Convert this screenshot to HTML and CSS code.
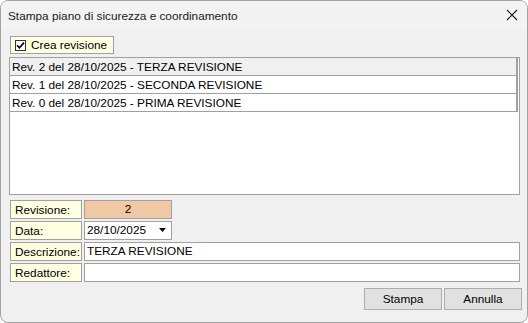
FILE: index.html
```html
<!DOCTYPE html>
<html>
<head>
<meta charset="utf-8">
<link rel="stylesheet" href="styles.css">
</head>
<body>
<div class="window">
  <div class="titlebar">
    <span class="title">Stampa piano di sicurezza e coordinamento</span>
    <svg class="close" width="12" height="12" viewBox="0 0 12 12"><path d="M1 1 L11 11 M11 1 L1 11" stroke="#1a1a1a" stroke-width="1.1" fill="none"/></svg>
  </div>
  <div class="content">
    <label class="checkgroup">
      <span class="checkbox"><svg width="9" height="9" viewBox="0 0 9 9"><path d="M1 4.2 L3.4 6.8 L8 1.6" stroke="#000" stroke-width="1.6" fill="none"/></svg></span>
      <span>Crea revisione</span>
    </label>
    <div class="list">
      <div class="row selected">Rev. 2 del 28/10/2025 - TERZA REVISIONE</div>
      <div class="row">Rev. 1 del 28/10/2025 - SECONDA REVISIONE</div>
      <div class="row">Rev. 0 del 28/10/2025 - PRIMA REVISIONE</div>
    </div>
    <div class="fields">
      <div class="field">
        <div class="label">Revisione:</div>
        <div class="value peach">2</div>
      </div>
      <div class="field">
        <div class="label">Data:</div>
        <div class="value date"><span>28/10/2025</span><svg width="8" height="5" viewBox="0 0 8 5"><path d="M0 0 H7 L3.5 4 Z" fill="#000"/></svg></div>
      </div>
      <div class="field">
        <div class="label">Descrizione:</div>
        <div class="value wide">TERZA REVISIONE</div>
      </div>
      <div class="field">
        <div class="label">Redattore:</div>
        <div class="value wide"></div>
      </div>
    </div>
    <div class="buttons">
      <div class="btn">Stampa</div>
      <div class="btn">Annulla</div>
    </div>
  </div>
</div>
</body>
</html>
```
FILE: styles.css
```css
html, body {
  margin: 0;
  padding: 0;
  background: #ffffff;
}
.window {
  width: 528px;
  height: 323px;
  box-sizing: border-box;
  border: 1px solid #a3a3a3;
  border-radius: 8px;
  overflow: hidden;
  background: #f0f0f0;
  font-family: "Liberation Sans", Arial, sans-serif;
  font-size: 11.8px;
  color: #000;
}
.titlebar {
  height: 29px;
  background: #f3f3f3;
  display: flex;
  align-items: center;
  justify-content: space-between;
  padding: 0 9px 0 7px;
}
.title {
  font-size: 11.8px;
  color: #1a1a1a;
}
.close {
  display: block;
  margin-top: -1px;
}
.content {
  padding: 6px 7px 0 8px;
  display: flex;
  flex-direction: column;
}
.checkgroup {
  margin-left: 1px;
  width: 104px;
  height: 18px;
  box-sizing: border-box;
  border: 1px solid #a0a0a0;
  background: #ffffe1;
  display: flex;
  align-items: center;
  padding-left: 4px;
  gap: 5px;
}
.checkbox {
  width: 11px;
  height: 11px;
  box-sizing: border-box;
  border: 1px solid #333;
  background: #fff;
  display: flex;
  align-items: center;
  justify-content: center;
}
.checkbox svg { display: block; }
.list {
  margin-top: 3px;
  height: 138px;
  box-sizing: border-box;
  border: 1px solid #a0a0a0;
  background: #fff;
}
.row {
  height: 18px;
  box-sizing: border-box;
  border-bottom: 1px solid #a0a0a0;
  border-right: 2px solid #a0a0a0;
  margin-right: 1px;
  padding-left: 2px;
  line-height: 18px;
  white-space: nowrap;
}
.row.selected {
  background: #f0f0f0;
}
.fields {
  margin-top: 5px;
  display: flex;
  flex-direction: column;
  gap: 2px;
}
.field {
  display: flex;
  gap: 2px;
  height: 19px;
}
.label {
  margin-left: 1px;
  width: 72px;
  box-sizing: border-box;
  border: 1px solid #a0a0a0;
  background: #ffffe1;
  padding-left: 4px;
  line-height: 18px;
}
.value {
  box-sizing: border-box;
  border: 1px solid #a0a0a0;
  background: #fff;
  line-height: 17px;
  padding-left: 2px;
}
.peach {
  width: 88px;
  background: #f0c8a5;
  text-align: center;
  padding-left: 0;
}
.date {
  width: 88px;
  display: flex;
  align-items: center;
  justify-content: space-between;
  padding-right: 4px;
}
.wide {
  flex: 1;
}
.buttons {
  margin-top: 6px;
  display: flex;
  justify-content: flex-end;
  gap: 2px;
  margin-right: -2px;
}
.btn {
  width: 78px;
  height: 22px;
  box-sizing: border-box;
  border: 1px solid #adadad;
  background: #e1e1e1;
  display: flex;
  align-items: center;
  justify-content: center;
}
```
